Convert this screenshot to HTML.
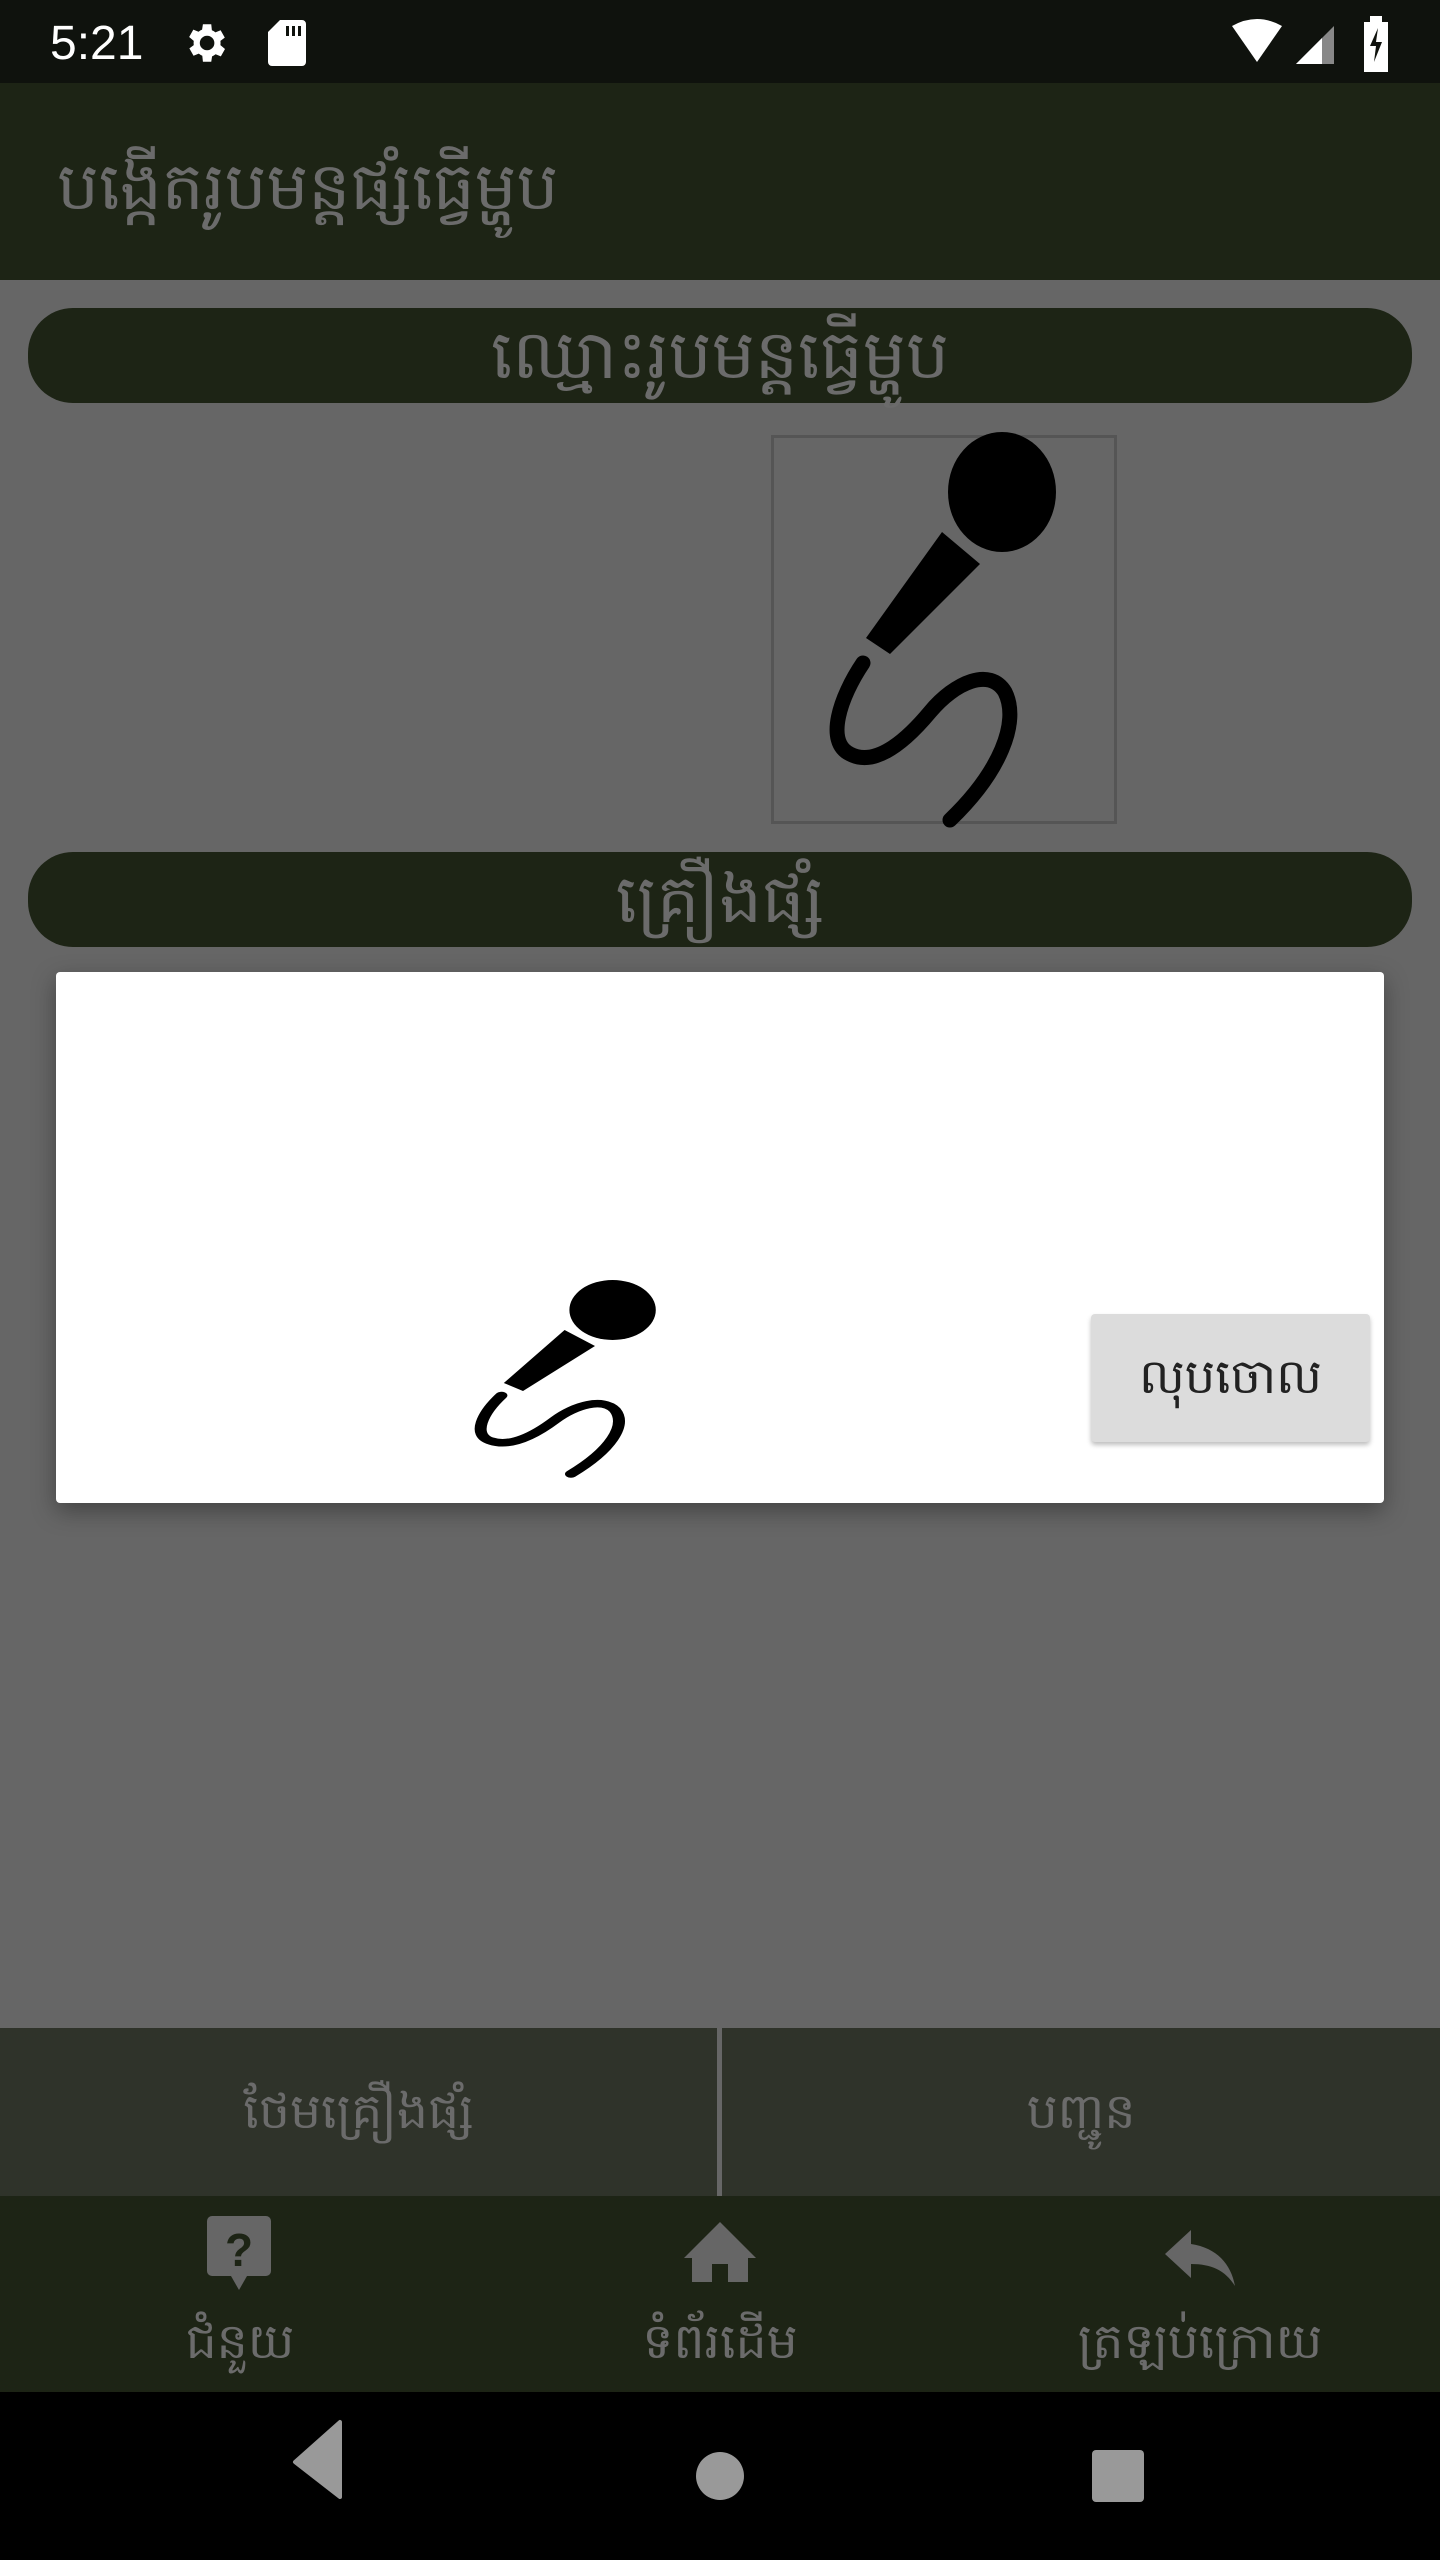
<!DOCTYPE html>
<html><head><meta charset="utf-8"><style>
*{margin:0;padding:0;box-sizing:border-box}
body{width:1440px;height:2560px;position:relative;background:#666;font-family:"Liberation Sans","Noto Sans CJK SC",sans-serif;overflow:hidden}
.abs{position:absolute}
.kh{color:#6b6b6b}
</style></head><body>
<div class="abs" style="left:0;top:0;width:1440px;height:83px;background:#0f120d"></div>
<div class="abs" style="left:50px;top:16px;font-size:48px;color:#fff">5:21</div>
<svg class="abs" style="left:180px;top:18px" width="50" height="50" viewBox="0 0 24 24"><path fill="#fff" d="M19.4 13a7.5 7.5 0 000-2l2.1-1.6-2-3.5-2.5 1a7 7 0 00-1.7-1L15 3h-4l-.4 2.6a7 7 0 00-1.7 1l-2.5-1-2 3.5L6.6 11a7.5 7.5 0 000 2l-2.1 1.6 2 3.5 2.5-1a7 7 0 001.7 1L11 21h4l.4-2.6a7 7 0 001.7-1l2.5 1 2-3.5zM13 15.5A3.5 3.5 0 1113 8.5a3.5 3.5 0 010 7z"/></svg>
<svg class="abs" style="left:268px;top:20px" width="38" height="46" viewBox="0 0 19 23"><path fill="#fff" d="M6 0h11a2 2 0 012 2v19a2 2 0 01-2 2H2a2 2 0 01-2-2V6zM9 3v5h1.5V3zm3 0v5h1.5V3zm3 0v5h1.5V3z"/></svg>
<svg class="abs" style="left:1230px;top:18px" width="110" height="50" viewBox="0 0 110 50"><path fill="#fff" d="M2 8 Q27 -6 52 8 L27 44z"/><path fill="#888" d="M66 46 L104 8 L104 46z"/><path fill="#fff" d="M66 46 L92 20 L92 46z"/></svg>
<svg class="abs" style="left:1362px;top:16px" width="28" height="56" viewBox="0 0 14 28"><path fill="#fff" d="M4 0h6v3h3v25H1V3h3z"/><path fill="#0f120d" d="M8 6 4 15h3l-1 8 4-10H7z"/></svg>

<div class="abs" style="left:0;top:83px;width:1440px;height:197px;background:#1d2415"></div>
<div class="abs kh" style="left:57px;top:138px;font-size:66px;line-height:96px;white-space:nowrap">បង្កើតរូបមន្តផ្សំធ្វើម្ហូប</div>

<div class="abs" style="left:28px;top:308px;width:1384px;height:95px;border-radius:45px;background:#1d2415;text-align:center;font-size:68px;line-height:95px;color:#6b6b6b;white-space:nowrap">ឈ្មោះរូបមន្តធ្វើម្ហូប</div>
<div class="abs" style="left:771px;top:435px;width:346px;height:389px;border:3px solid #555"></div>
<svg class="abs" style="left:0;top:0" width="1440" height="2560">
<defs><g id="mic"><ellipse cx="172" cy="60" rx="54" ry="60"/><path d="M112,100 L150,132 L60,222 L36,206Z"/><path d="M33,231 C10,265 -5,310 20,322 C45,335 75,310 100,280 C125,250 160,235 175,260 C190,290 170,340 120,388" fill="none" stroke="#000" stroke-width="15" stroke-linecap="round"/></g></defs>
<use href="#mic" transform="translate(830,432)"/>
</svg>
<div class="abs" style="left:28px;top:852px;width:1384px;height:95px;border-radius:45px;background:#1d2415;text-align:center;font-size:67px;line-height:95px;color:#6b6b6b">គ្រឿងផ្សំ</div>

<div class="abs" style="left:56px;top:972px;width:1328px;height:531px;background:#fff;border-radius:4px;box-shadow:0 8px 24px rgba(0,0,0,.35)"></div>
<svg class="abs" style="left:0;top:0" width="1440" height="2560"><use href="#mic" transform="translate(475,1280) scale(0.8,0.5)"/></svg>
<div class="abs" style="left:1091px;top:1314px;width:279px;height:128px;background:#dcdcdc;border-radius:4px;box-shadow:0 3px 5px rgba(0,0,0,.25);text-align:center;font-size:48px;line-height:128px;color:#222">លុបចោល</div>

<div class="abs" style="left:0;top:2028px;width:1440px;height:168px;background:#2f332a"></div>
<div class="abs" style="left:717px;top:2028px;width:5px;height:168px;background:#666"></div>
<div class="abs kh" style="left:0;top:2028px;width:717px;text-align:center;font-size:49px;line-height:168px">ថែមគ្រឿងផ្សំ</div>
<div class="abs kh" style="left:722px;top:2028px;width:718px;text-align:center;font-size:49px;line-height:168px">បញ្ជូន</div>

<div class="abs" style="left:0;top:2196px;width:1440px;height:196px;background:#1d2415"></div>
<svg class="abs" style="left:207px;top:2216px" width="64" height="76" viewBox="0 0 64 76"><rect x="0" y="0" width="64" height="60" rx="5" fill="#666"/><path d="M24 60h16l-8 14z" fill="#666"/><text x="32" y="50" font-size="46" font-weight="bold" text-anchor="middle" fill="#1d2415" font-family="Liberation Sans">?</text></svg>
<svg class="abs" style="left:684px;top:2222px" width="72" height="60" viewBox="0 0 72 60"><path d="M36 0 72 36H64V60H44V42H28V60H8V36H0z" fill="#666"/></svg>
<svg class="abs" style="left:1165px;top:2230px" width="70" height="56" viewBox="0 0 70 56"><path d="M26 0 0 24l26 24V34c20 0 34 6 44 22C66 34 52 18 26 14z" fill="#666"/></svg>
<div class="abs kh" style="left:90px;top:2310px;width:300px;text-align:center;font-size:49px">ជំនួយ</div>
<div class="abs kh" style="left:570px;top:2310px;width:300px;text-align:center;font-size:49px">ទំព័រដើម</div>
<div class="abs kh" style="left:1030px;top:2310px;width:340px;text-align:center;font-size:49px;white-space:nowrap">ត្រឡប់ក្រោយ</div>

<div class="abs" style="left:0;top:2392px;width:1440px;height:168px;background:#000"></div>
<svg class="abs" style="left:0;top:2392px" width="1440" height="168"><path d="M340 30 V105 L295 70Z" fill="#999" stroke="#999" stroke-width="4" stroke-linejoin="round"/><circle cx="720" cy="84" r="24" fill="#999"/><rect x="1092" y="58" width="52" height="52" rx="4" fill="#999"/></svg>
</body></html>
